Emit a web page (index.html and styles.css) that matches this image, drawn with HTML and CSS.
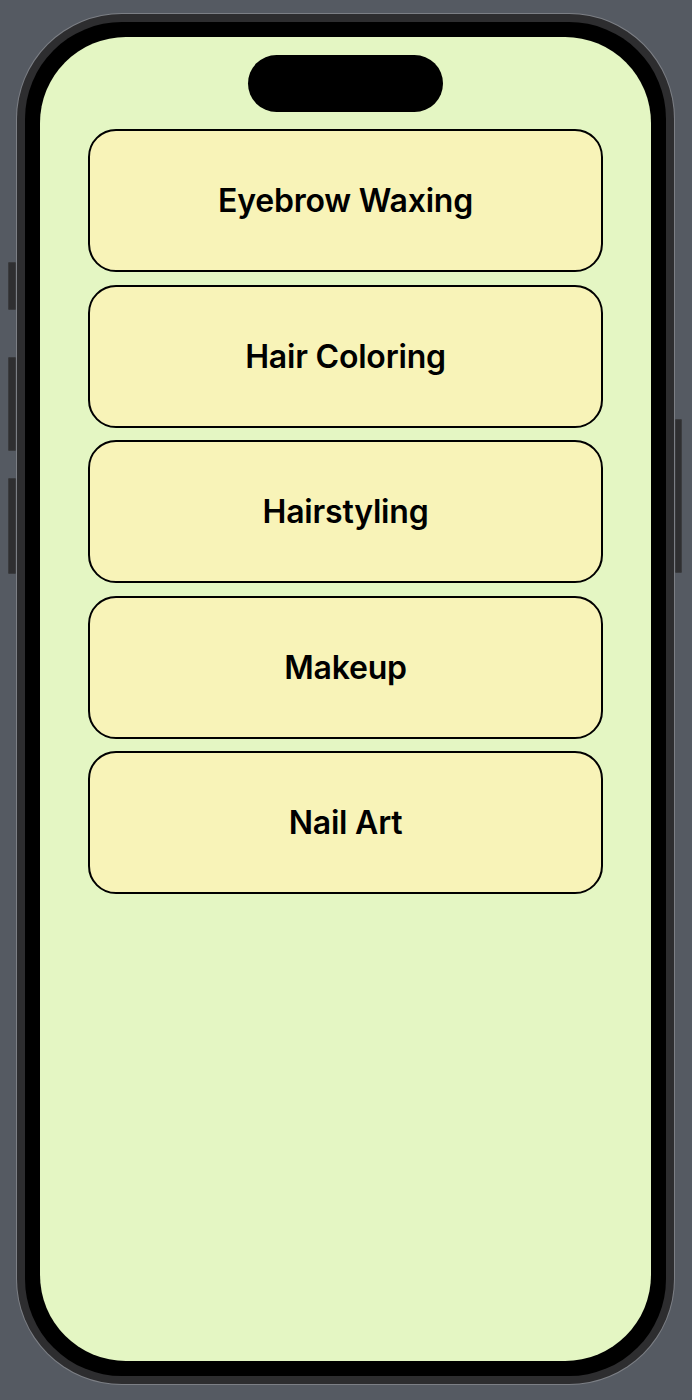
FILE: index.html
```html
<!DOCTYPE html>
<html lang="en">
<head>
<meta charset="utf-8">
<title>Services</title>
<link rel="stylesheet" href="styles.css">
</head>
<body>
<div class="phone">
  <span class="side-btn btn-action"></span>
  <span class="side-btn btn-vol-up"></span>
  <span class="side-btn btn-vol-down"></span>
  <span class="side-btn btn-power"></span>
  <div class="band">
    <div class="bezel">
      <div class="screen">
        <div class="island"></div>
        <ul class="services">
          <li class="card">Eyebrow Waxing</li>
          <li class="card">Hair Coloring</li>
          <li class="card">Hairstyling</li>
          <li class="card">Makeup</li>
          <li class="card">Nail Art</li>
        </ul>
      </div>
    </div>
  </div>
</div>
</body>
</html>
```
FILE: styles.css
```css
html, body {
  margin: 0;
  padding: 0;
  background: #555a62;
}
body {
  padding: 13px 0 0 16px;
  height: 1400px;
  box-sizing: border-box;
  font-family: Inter, "Noto Sans", sans-serif;
}
.phone {
  position: relative;
  width: 659px;
  height: 1372px;
  box-sizing: border-box;
  border-radius: 106px;
  background: #7c7f85;
  padding: 1px;
}
.band {
  height: 100%;
  box-sizing: border-box;
  border-radius: 105px;
  background: #2d2d2f;
  padding: 8px;
}
.bezel {
  height: 100%;
  box-sizing: border-box;
  border-radius: 97px;
  background: #000;
  padding: 15px;
}
.screen {
  height: 100%;
  box-sizing: border-box;
  border-radius: 86px;
  background: #e4f6c3;
  display: flex;
  flex-direction: column;
  align-items: center;
  padding-top: 18px;
  overflow: hidden;
}
.island {
  width: 195px;
  height: 57px;
  border-radius: 29px;
  background: #000;
  flex: none;
}
.services {
  list-style: none;
  margin: 17px 0 0;
  padding: 0;
  width: 515px;
  display: flex;
  flex-direction: column;
  gap: 12.5px;
}
.card {
  height: 143px;
  box-sizing: border-box;
  border: 2px solid #000;
  border-radius: 28px;
  background: #f8f3b8;
  display: flex;
  align-items: center;
  justify-content: center;
  font-size: 32px;
  font-weight: 600;
  color: #000;
  letter-spacing: -0.2px;
}
.side-btn {
  position: absolute;
  width: 8px;
  background: #2f2f31;
  border-radius: 2px;
  box-shadow: inset 0 0 0 1px #3a3b3e;
}
.btn-action { left: -8px; top: 249px; height: 48px; }
.btn-vol-up { left: -8px; top: 344px; height: 94px; }
.btn-vol-down { left: -8px; top: 465px; height: 96px; }
.btn-power { right: -7px; top: 406px; height: 154px; width: 7px; }
```
